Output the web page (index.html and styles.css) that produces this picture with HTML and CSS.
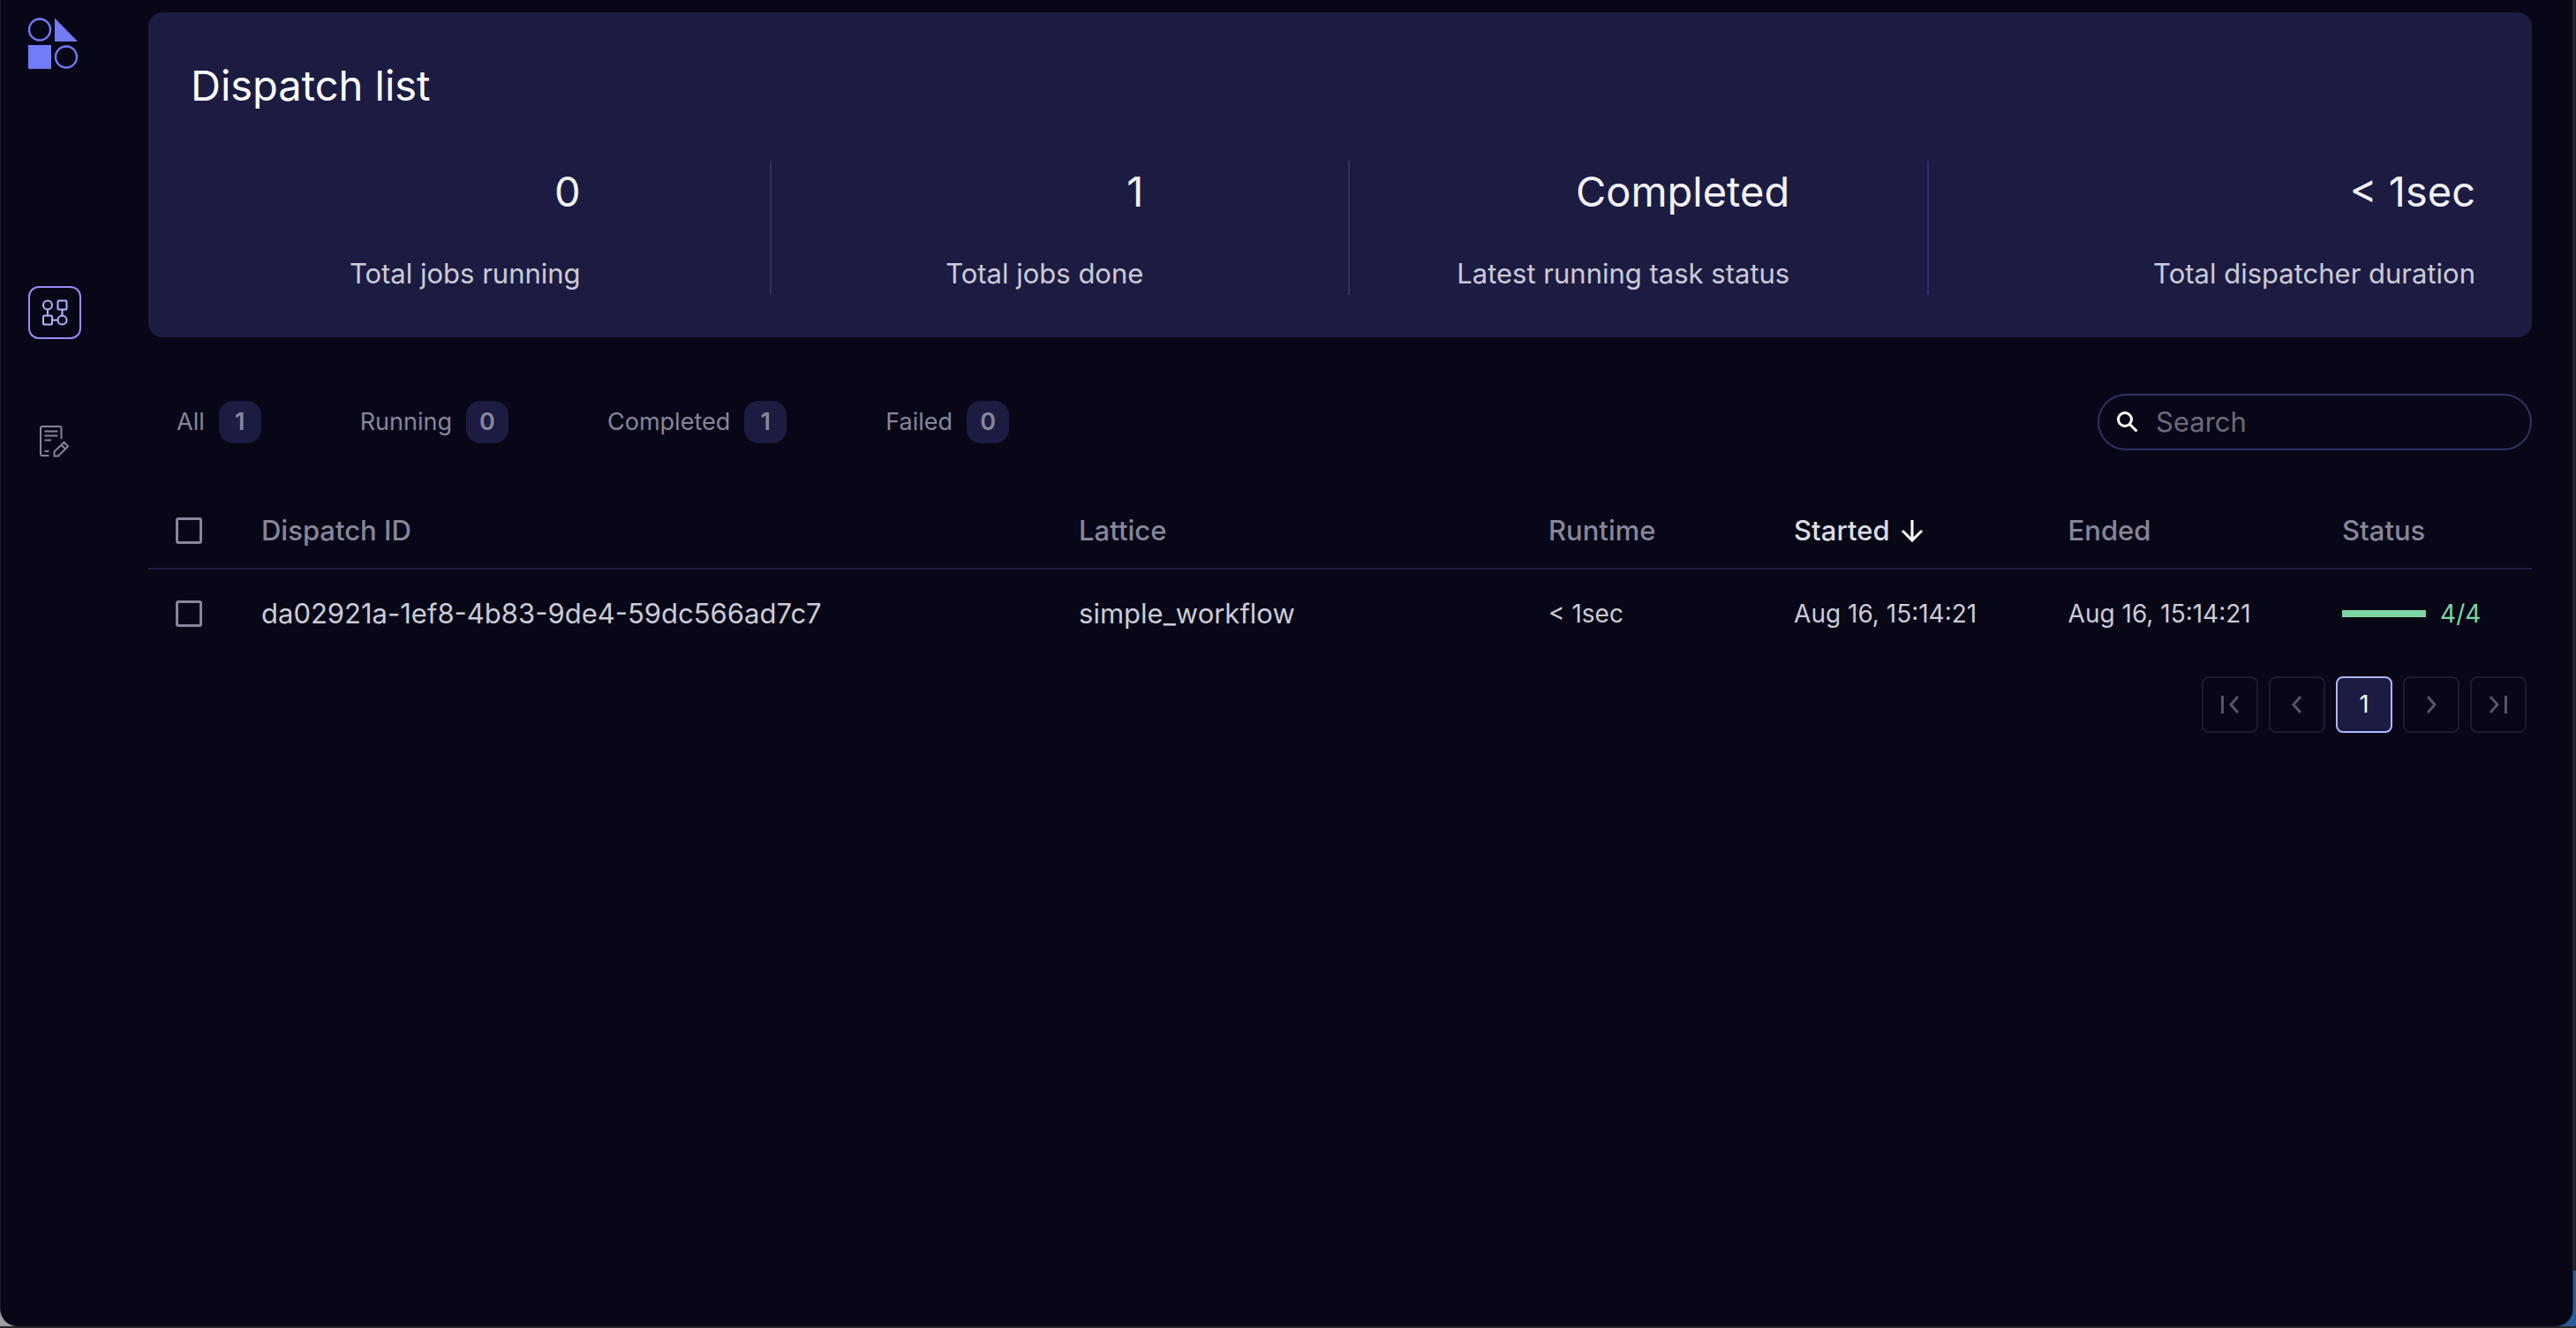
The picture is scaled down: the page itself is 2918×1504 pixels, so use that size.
FILE: index.html
```html
<!DOCTYPE html>
<html lang="en">
<head>
<meta charset="utf-8">
<meta name="viewport" content="width=device-width, initial-scale=1">
<title>Dispatch list</title>
<link rel="stylesheet" href="styles.css">
</head>
<body>
<div class="window">
  <aside class="sidebar">
    <a class="logo" href="#" aria-label="Home">
      <svg viewBox="0 0 56 58" width="56" height="58">
        <circle cx="13" cy="13.500" r="12" fill="none" stroke="#727cf9" stroke-width="2.400"/>
        <path d="M30 .5V27H56Z" fill="#727cf9"/>
        <path d="M0 31H26V58H0Z" fill="#727cf9"/>
        <circle cx="43" cy="44.500" r="12" fill="none" stroke="#727cf9" stroke-width="2.400"/>
      </svg>
    </a>
    <nav class="nav">
      <a class="nav-link nav-link-active" href="#" aria-label="Dispatches">
        <svg viewBox="0 0 30 30" width="30" height="30" fill="none" stroke="#aeb6ff" stroke-width="2">
          <circle cx="7" cy="6.500" r="5"/>
          <rect x="18.500" y="1.500" width="10" height="10" rx="1"/>
          <rect x="2" y="18.500" width="10" height="10" rx="1"/>
          <circle cx="23.500" cy="23.500" r="5"/>
          <path d="M7 11.500V18.500M23.500 11.500V18.500M12 23.500H18.500"/>
        </svg>
      </a>
      <a class="nav-link" href="#" aria-label="Logs">
        <svg viewBox="0 0 34 36" width="34" height="36" fill="none" stroke="#86869a" stroke-width="2">
          <path d="M24.500 15V3Q24.500 1 22.500 1H3Q1 1 1 3V32Q1 34 3 34H10.500M5.500 6.500H20.500M5.500 11.500H20.500M5.500 16.500H13M5.500 29H10.500"/>
          <path d="M16.500 34.500V29.500L27.500 19L32 23.500L21 34.500ZM24.500 22L29 26.500"/>
        </svg>
      </a>
    </nav>
  </aside>

  <main class="main">
    <section class="summary">
      <h1 class="title">Dispatch list</h1>
      <dl class="stats">
        <div class="stat"><div class="stat-body"><dt>Total jobs running</dt><dd>0</dd></div></div>
        <div class="stat"><div class="stat-body"><dt>Total jobs done</dt><dd>1</dd></div></div>
        <div class="stat"><div class="stat-body"><dt>Latest running task status</dt><dd>Completed</dd></div></div>
        <div class="stat"><div class="stat-body"><dt>Total dispatcher duration</dt><dd>&lt; 1sec</dd></div></div>
      </dl>
    </section>

    <div class="toolbar">
      <div class="filters">
        <button class="filter" type="button">All <span class="count">1</span></button>
        <button class="filter" type="button">Running <span class="count">0</span></button>
        <button class="filter" type="button">Completed <span class="count">1</span></button>
        <button class="filter" type="button">Failed <span class="count">0</span></button>
      </div>
      <label class="search">
        <svg viewBox="0 0 24 24" width="24" height="24" fill="none" stroke="#fff" stroke-width="3" aria-hidden="true">
          <circle cx="9" cy="9" r="7.500"/>
          <path d="M14.500 14.500L22.500 22.500"/>
        </svg>
        <input type="search" placeholder="Search" aria-label="Search">
      </label>
    </div>

    <table class="dispatches">
      <colgroup>
        <col class="col-check"><col class="col-id"><col class="col-lattice"><col class="col-runtime"><col class="col-time"><col class="col-time"><col class="col-status">
      </colgroup>
      <thead>
        <tr>
          <th scope="col"><input class="check" type="checkbox" aria-label="Select all dispatches"></th>
          <th scope="col">Dispatch ID</th>
          <th scope="col">Lattice</th>
          <th scope="col">Runtime</th>
          <th scope="col" class="sorted" aria-sort="descending"><span class="sort">Started
            <svg viewBox="0 0 26 26" width="26" height="26" fill="none" stroke="#fff" stroke-width="3" aria-hidden="true"><path d="M13 1V23M2 13L13 24L24 13"/></svg></span></th>
          <th scope="col">Ended</th>
          <th scope="col">Status</th>
        </tr>
      </thead>
      <tbody>
        <tr>
          <td><input class="check" type="checkbox" aria-label="Select dispatch"></td>
          <td>da02921a-1ef8-4b83-9de4-59dc566ad7c7</td>
          <td>simple_workflow</td>
          <td class="narrow">&lt; 1sec</td>
          <td class="narrow">Aug 16, 15:14:21</td>
          <td class="narrow">Aug 16, 15:14:21</td>
          <td class="narrow"><span class="status"><span class="bar"></span>4/4</span></td>
        </tr>
      </tbody>
    </table>

    <nav class="pager" aria-label="Pagination">
      <button class="page" type="button" aria-label="First page" disabled><svg viewBox="0 0 24 24" width="24" height="24"><path d="M3.500 2V22M21 3L13 12L21 21"/></svg></button>
      <button class="page" type="button" aria-label="Previous page" disabled><svg viewBox="0 0 24 24" width="24" height="24"><path d="M16 3L8 12L16 21"/></svg></button>
      <button class="page page-current" type="button" aria-current="page">1</button>
      <button class="page" type="button" aria-label="Next page" disabled><svg viewBox="0 0 24 24" width="24" height="24"><path d="M8 3L16 12L8 21"/></svg></button>
      <button class="page" type="button" aria-label="Last page" disabled><svg viewBox="0 0 24 24" width="24" height="24"><path d="M3 3L11 12L3 21M20.500 2V22"/></svg></button>
    </nav>
  </main>
</div>
</body>
</html>
```
FILE: styles.css
```css
* {
  box-sizing: border-box;
}

body {
  margin: 0;
  min-height: 100vh;
  padding: 0 3px 2px 0;
  display: flex;
  background:
    linear-gradient(#25272b, #25272b) bottom / 100% 2px no-repeat,
    linear-gradient(#2a5d9c, #2a5d9c) right bottom / 50% 65px no-repeat,
    linear-gradient(#a0a0a0, #a0a0a0) left bottom / 50% 65px no-repeat,
    #202124;
  color: #cbcbd7;
  font: 400 31px/48px Inter, "Open Sans", sans-serif;
}

.window {
  flex: 1;
  display: flex;
  background: #080717;
  border-left: 1px solid #1c1c2b;
  border-right: 1px solid #2b2b36;
  border-radius: 0 0 20px 20px;
}

.sidebar {
  width: 167px;
  flex: none;
  padding: 20px 0 0 31px;
}

.logo,
.logo svg {
  display: block;
}

.nav {
  margin-top: 246px;
  display: flex;
  flex-direction: column;
  gap: 86px;
}

.nav-link {
  width: 60px;
  height: 60px;
  display: flex;
  align-items: center;
  justify-content: center;
  border-radius: 12px;
}

.nav-link-active {
  border: 2px solid #998afb;
}

.main {
  flex: 1;
  padding: 14px 46px 32px 0;
}

.summary {
  padding: 55px 30px 48px 48px;
  background: #1c1c42;
  border-radius: 16px;
}

.title {
  margin: 0 0 57px;
  color: #fff;
  font-size: 47px;
  font-weight: 400;
  line-height: 56px;
}

.stats {
  margin: 0;
  display: grid;
  grid-template-columns: repeat(4, 1fr);
}

.stat {
  height: 152px;
  padding-right: 34px;
  display: flex;
  justify-content: center;
}

.stat + .stat {
  border-left: 2px solid #303067;
}

.stat:last-child {
  justify-content: flex-end;
}

.stat-body {
  display: flex;
  flex-direction: column-reverse;
  justify-content: space-between;
  text-align: right;
}

.stat dd {
  margin: 0;
  color: #f2f2f8;
  font-size: 47px;
  line-height: 70px;
}

.toolbar {
  margin: 64px 0 48px;
  display: flex;
  align-items: center;
  justify-content: space-between;
}

.filters {
  padding-left: 32px;
  display: flex;
  gap: 112px;
}

button {
  margin: 0;
  padding: 0;
  border: 0;
  background: none;
  font: inherit;
}

.filter {
  display: flex;
  align-items: center;
  gap: 16px;
  color: #86869a;
  font-size: 27px;
}

.count {
  width: 48px;
  height: 48px;
  border-radius: 16px;
  background: #1c1c42;
  font-weight: 600;
  text-align: center;
}

.search {
  width: 492px;
  height: 64px;
  padding: 0 20px;
  display: flex;
  align-items: center;
  gap: 20px;
  border: 2px solid #303067;
  border-radius: 32px;
}

.search input {
  min-width: 0;
  flex: 1;
  padding: 0;
  border: 0;
  outline: 0;
  background: none;
  color: #fff;
  font: inherit;
}

.search input::placeholder {
  color: #6a6a79;
  opacity: 1;
}

.dispatches {
  width: 100%;
  table-layout: fixed;
  border-collapse: collapse;
}

.col-check { width: 128px; }
.col-id { width: 34.3%; }
.col-lattice { width: 19.7%; }
.col-runtime { width: 10.3%; }
.col-time { width: 11.5%; }

.dispatches th,
.dispatches td {
  padding: 0;
  text-align: left;
  vertical-align: middle;
  white-space: nowrap;
}

.dispatches th {
  height: 86px;
  border-bottom: 2px solid #1c1c42;
  color: #86869a;
  font-weight: 500;
}

.dispatches th.sorted {
  color: #dcdce4;
}

.dispatches td {
  height: 100px;
}

.dispatches .narrow {
  font-size: 28px;
}

.sort {
  display: flex;
  align-items: center;
  gap: 12px;
}

.check {
  appearance: none;
  display: block;
  width: 30px;
  height: 30px;
  margin: 0 0 0 31px;
  border: 3px solid #86869a;
  border-radius: 3px;
}

.status {
  display: flex;
  align-items: center;
  gap: 16px;
  color: #7dd6a1;
}

.bar {
  width: 95px;
  height: 8px;
  background: #7dd6a1;
}

.pager {
  margin-top: 22px;
  padding-right: 6px;
  display: flex;
  justify-content: flex-end;
  gap: 12px;
}

.page {
  width: 64px;
  height: 64px;
  display: flex;
  align-items: center;
  justify-content: center;
  border: 2px solid #1b1b29;
  border-radius: 8px;
}

.page svg {
  fill: none;
  stroke: #565565;
  stroke-width: 3;
}

.page-current {
  border-color: #aeb6ff;
  background: #1c1c42;
  color: #fff;
  font-size: 27px;
}
```
